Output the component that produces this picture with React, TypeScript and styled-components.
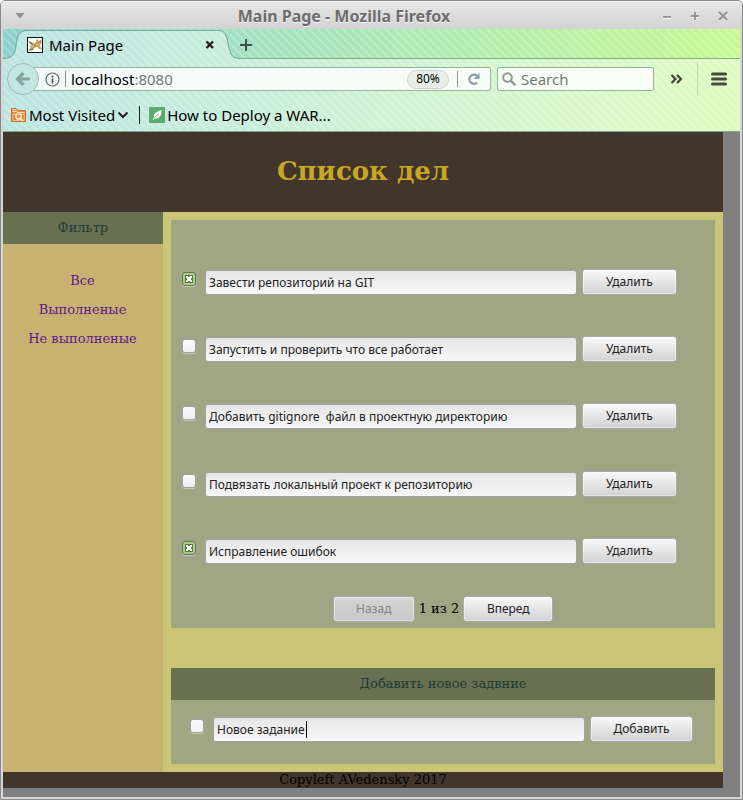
import React, { useState } from "react";
import styled, { createGlobalStyle, css } from "styled-components";

const sans = '"Noto Sans", "Open Sans", sans-serif';
const serif = '"DejaVu Serif", "Liberation Serif", serif';

const GlobalStyle = createGlobalStyle`
  *, *::before, *::after { box-sizing: border-box; }
  body { margin: 0; background: #fff; }
  button, input { font: inherit; color: inherit; margin: 0; }
`;

const Window = styled.div`
  display: flex;
  flex-direction: column;
  min-height: 100vh;
  border: 1px solid #8a8a8a;
  border-radius: 5px 5px 0 0;
  background: #d7d5d6;
  font-family: ${sans};
`;

const TitleBar = styled.div`
  display: flex;
  align-items: center;
  height: 28px;
  padding: 0 13px 0 12px;
  border-top: 1px solid #f4f4f4;
  border-radius: 4px 4px 0 0;
  background: linear-gradient(#e6e6e6, #d3d3d3);
  color: #959595;
`;

const TitleText = styled.div`
  flex: 1;
  text-align: center;
  font-size: 16px;
  line-height: 26px;
  font-weight: 700;
  color: #6d6d6d;
  text-shadow: 0 1px 0 #f5f5f5;
`;

const PlainButton = styled.button`
  display: inline-flex;
  align-items: center;
  justify-content: center;
  flex: none;
  padding: 0;
  border: 0;
  background: none;
  color: inherit;
`;

const TitleButtons = styled.div`
  display: flex;
  gap: 16px;
`;

const Chrome = styled.div`
  margin: 0 2px;
  border-bottom: 1px solid #7fa88c;
  background:
    repeating-linear-gradient(45deg, rgba(255, 255, 255, 0.22) 0 1px, rgba(255, 255, 255, 0) 2px 5px, rgba(255, 255, 255, 0.22) 6px),
    linear-gradient(100deg, #8ad0cc 0%, #9fe0c2 30%, #b2ecae 62%, #c9f991 100%);
`;

const TabStrip = styled.div`
  display: flex;
  height: 30px;
`;

const Tab = styled.div`
  display: flex;
  width: 237px;
`;

const TabEdge = styled.svg`
  display: block;
  flex: none;
`;

const TabBody = styled.div`
  display: flex;
  align-items: center;
  flex: 1;
  gap: 6px;
  margin-top: 1px;
  padding-right: 3px;
  border-top: 1px solid #7ea99c;
  background: rgba(255, 255, 255, 0.42);
  font-size: 15px;
  line-height: 20px;
  color: #000;
`;

const TabLabel = styled.span`
  flex: 1;
`;

const StripRest = styled.div`
  display: flex;
  align-items: center;
  flex: 1;
  border-bottom: 1px solid #7fae86;
  color: #444;
`;

const Toolbars = styled.div`
  background: rgba(255, 255, 255, 0.42);
`;

const NavBar = styled.div`
  display: flex;
  align-items: center;
  height: 40px;
  padding: 0 13px 0 4px;
`;

const BackButton = styled(PlainButton)`
  width: 32px;
  height: 32px;
  border: 1px solid #9cbcb6;
  border-radius: 50%;
  background: #c3e6e0;
  z-index: 1;
`;

const Field = styled.div<{ $grow?: boolean }>`
  display: flex;
  align-items: center;
  height: 24px;
  border: 1px solid #96b499;
  background: rgba(255, 255, 255, 0.8);
  ${(p) =>
    p.$grow
      ? css`
          flex: 1;
          margin-left: -6px;
          padding: 0 9px 0 11px;
          border-radius: 0 2px 2px 0;
        `
      : css`
          width: 157px;
          margin-left: 6px;
          padding: 0 4px;
          border-radius: 2px;
        `}
`;

const Divider = styled.span<{ $h: number; $color: string }>`
  flex: none;
  width: 1px;
  height: ${(p) => p.$h}px;
  background: ${(p) => p.$color};
`;

const Spacer = styled.span<{ $w: number }>`
  flex: none;
  width: ${(p) => p.$w}px;
`;

const Address = styled.div`
  flex: 1;
  margin-left: 5px;
  font-size: 15px;
  line-height: 20px;
  color: #000;
  span { color: #777; }
`;

const Zoom = styled.button`
  height: 19px;
  width: 42px;
  margin-right: 8px;
  padding: 0;
  border: 1px solid #ccd2cc;
  border-radius: 10px;
  background: #e9efe8;
  font-size: 12px;
  line-height: 16px;
  color: #000;
`;

const SearchInput = styled.input`
  flex: 1;
  min-width: 0;
  margin-left: 4px;
  padding: 0;
  border: 0;
  outline: 0;
  background: none;
  font-size: 15px;
  line-height: 20px;
  &::placeholder { color: #757b75; opacity: 1; }
`;

const NavActions = styled.div`
  display: flex;
  align-items: center;
  gap: 13px;
  margin-left: 16px;
  color: #444;
`;

const Bookmarks = styled.nav`
  display: flex;
  align-items: center;
  height: 32px;
  padding: 0 7px 1px;
  font-size: 15px;
  line-height: 20px;
`;

const Bookmark = styled.a`
  display: flex;
  align-items: center;
  gap: 2px;
  color: #000;
  text-decoration: none;
`;

const Viewport = styled.div`
  flex: 1;
  margin: 0 2px 2px;
  padding: 0 17px 9px 0;
  background: #808080;
  font-family: ${serif};
  font-size: 13px;
  line-height: 16px;
  color: #000;
`;

const PageHeader = styled.header`
  display: flex;
  align-items: center;
  justify-content: center;
  height: 80px;
  padding-bottom: 2px;
  background: #42352b;
`;

const Heading = styled.h1`
  margin: 0;
  font-size: 26px;
  line-height: 32px;
  color: #c9a724;
`;

const Columns = styled.div`
  display: flex;
`;

const Sidebar = styled.aside`
  flex: none;
  width: 160px;
  background: #c8b271;
`;

const SectionTitle = styled.h2`
  margin: 0;
  height: 32px;
  font-size: 13px;
  line-height: 32px;
  font-weight: 400;
  text-align: center;
  background: #677152;
  color: #203a36;
`;

const FilterList = styled.ul`
  display: flex;
  flex-direction: column;
  align-items: center;
  gap: 13px;
  margin: 0;
  padding: 29px 1px 0 0;
  list-style: none;
`;

const FilterLink = styled.a`
  color: #5e1a8c;
  text-decoration: none;
`;

const Main = styled.main`
  display: flex;
  flex-direction: column;
  flex: 1;
  min-width: 0;
  gap: 40px;
  padding: 8px;
  background: #cbc576;
`;

const Panel = styled.section`
  padding: 28px 0 6px;
  background: #a0a583;
`;

const TaskList = styled.ul`
  display: grid;
  grid-template-rows: repeat(5, 1fr);
  height: 337px;
  margin: 0;
  padding: 0 38px 0 11px;
  list-style: none;
`;

const TaskRow = styled.li`
  display: flex;
  align-items: center;
`;

const Controls = styled.div`
  display: flex;
  align-items: flex-end;
  flex: 1;
  gap: 5px;
  font-family: ${sans};
`;

const Check = styled.input.attrs({ type: "checkbox" })`
  appearance: none;
  display: flex;
  align-items: center;
  justify-content: center;
  flex: none;
  width: 14px;
  height: 14px;
  margin: 0 4px 9px 0;
  border: 1px solid #a2a2a6;
  border-radius: 3px;
  background: linear-gradient(#fafafa, #f0f0f0);
  box-shadow: 0 1px 0 #c4c7b2;
  &:checked {
    border-color: #66755a;
    background: #a8cb86;
  }
  &:checked::before {
    content: "";
    width: 8px;
    height: 8px;
    border: 1px solid #5a7a48;
    background:
      linear-gradient(#5a7a48, #5a7a48) center top / 2px 1px no-repeat,
      linear-gradient(#5a7a48, #5a7a48) center bottom / 2px 1px no-repeat,
      linear-gradient(#5a7a48, #5a7a48) left center / 1px 2px no-repeat,
      linear-gradient(#5a7a48, #5a7a48) right center / 1px 2px no-repeat,
      #fff;
  }
`;

const TextBox = styled.input.attrs({ type: "text" })`
  width: 100%;
  height: 25px;
  padding: 0 3px;
  border: 1px solid #a3a2aa;
  border-radius: 3px;
  outline: 0;
  background: linear-gradient(#e6e6e6, #f7f7f7);
  font-size: 12px;
  line-height: 16px;
  color: #222;
`;

const TextWrap = styled.div`
  position: relative;
  display: flex;
  flex: 1;
  min-width: 0;
`;

const Caret = styled.span`
  position: absolute;
  left: 93px;
  top: 4px;
  width: 1px;
  height: 17px;
  background: #000;
`;

const Button = styled.button<{ $w: number }>`
  flex: none;
  width: ${(p) => p.$w}px;
  height: 26px;
  padding: 0;
  border: 1px solid #a9a9ae;
  border-radius: 3px;
  background: linear-gradient(#f9f9f9, #d2d2d2);
  box-shadow: inset 0 0 0 1px rgba(255, 255, 255, 0.4);
  font-family: ${sans};
  font-size: 12px;
  line-height: 16px;
  color: #222;
  &:disabled {
    background: linear-gradient(#d4d4d4, #c8c8c8);
    color: #858585;
  }
`;

const Pager = styled.div`
  display: flex;
  align-items: center;
  justify-content: center;
  gap: 4px;
  padding-top: 11px;
`;

const AddForm = styled.form`
  display: flex;
  height: 64px;
  padding: 0 22px 22px 19px;
  background: #a0a583;
`;

const Footer = styled.footer`
  height: 16px;
  text-align: center;
  background: #42352b;
`;

const tasks = [
  { text: "Завести репозиторий на GIT", done: true },
  { text: "Запустить и проверить что все работает", done: false },
  { text: "Добавить gitignore  файл в проектную директорию", done: false },
  { text: "Подвязать локальный проект к репозиторию", done: false },
  { text: "Исправление ошибок", done: true },
];

function BrowserChrome() {
  return (
    <Chrome>
      <TabStrip>
        <Tab>
          <TabEdge width="24" height="30" viewBox="0 0 24 30">
            <path
              d="M0 29.5C9 29.5 12 25 13 17C14 7 16 1.5 24 1.5V30H0Z"
              fill="#fff"
              fillOpacity="0.42"
            />
            <path d="M0 29.5C9 29.5 12 25 13 17C14 7 16 1.5 24 1.5" fill="none" stroke="#71a398" />
          </TabEdge>
          <TabBody>
            <svg width="16" height="16" viewBox="0 0 16 16" aria-hidden="true">
              <rect x="0.5" y="0.5" width="15" height="15" fill="#fff" stroke="#111" />
              <path d="M1.5 13.5L3 11.5L4.500 10L3.500 9.500L5 7.500L2.500 6L2 4.500L5 5.800L7.500 7L9.500 5L9.800 2.500L11.200 4H12.500L14 2.800L14.200 6L12.500 8L13 10L14.500 12L12 11.500L10.500 9.500L8 10L6 12.500L4 13.500Z" fill="#d6a860" stroke="#8a744a" strokeWidth="0.5" />
              <path d="M3 5.500L5.500 7M7.500 7.500L8.500 9M11 5.800H11.800M12.800 5.800H13.300M4 12.500H6" stroke="#51452e" strokeWidth="0.8" />
            </svg>
            <TabLabel>Main Page</TabLabel>
            <PlainButton aria-label="Close tab">
              <svg width="10" height="10" viewBox="0 0 10 10">
                <path d="M1.500 1.500L8 8M8 1.500L1.500 8" stroke="#222" strokeWidth="2.400" />
              </svg>
            </PlainButton>
          </TabBody>
          <TabEdge width="22" height="30" viewBox="0 0 22 30">
            <path d="M0 1.5C7 1.5 8.500 6 10 14C12 25 14 29.5 22 29.5V30H0Z" fill="#fff" fillOpacity="0.42" />
            <path d="M0 1.5C7 1.5 8.500 6 10 14C12 25 14 29.5 22 29.5" fill="none" stroke="#71a387" />
          </TabEdge>
        </Tab>
        <StripRest>
          <PlainButton aria-label="New tab">
            <svg width="12" height="14" viewBox="0 0 12 14">
              <path d="M0 8H12M6 2V14" stroke="#4a4f4b" strokeWidth="2" />
            </svg>
          </PlainButton>
        </StripRest>
      </TabStrip>
      <Toolbars>
        <NavBar>
          <BackButton aria-label="Back">
            <svg width="16" height="16" viewBox="0 0 16 16">
              <path d="M8.500 2L2.500 8L8.500 14M3 8H15" fill="none" stroke="#8ba39f" strokeWidth="3.200" />
            </svg>
          </BackButton>
          <Field $grow>
            <PlainButton aria-label="Site information">
              <svg width="15" height="15" viewBox="0 0 15 15">
                <circle cx="7.500" cy="7.500" r="6.500" fill="none" stroke="#666" strokeWidth="1.200" />
                <path d="M7.500 3.500V5.500M7.500 6.500V11.500" stroke="#555" strokeWidth="1.700" />
              </svg>
            </PlainButton>
            <Spacer $w={5} />
            <Divider $h={16} $color="#8a908c" />
            <Address>
              localhost<span>:8080</span>
            </Address>
            <Zoom>80%</Zoom>
            <Divider $h={16} $color="#919891" />
            <Spacer $w={9} />
            <PlainButton aria-label="Reload">
              <svg width="14" height="14" viewBox="0 0 14 14">
                <path d="M10.200 10.500A4.600 4.600 0 1 1 10.200 4" fill="none" stroke="#8b9ba6" strokeWidth="2.200" />
                <path d="M12.500 1V7H6.800Z" fill="#8b9ba6" />
              </svg>
            </PlainButton>
          </Field>
          <Field>
            <svg width="15" height="15" viewBox="0 0 15 15" aria-hidden="true">
              <circle cx="5.500" cy="5.500" r="4.300" fill="none" stroke="#929792" strokeWidth="2" />
              <path d="M8.700 8.700L13.500 13.500" stroke="#929792" strokeWidth="2.400" />
            </svg>
            <SearchInput type="search" placeholder="Search" aria-label="Search" />
          </Field>
          <NavActions>
            <PlainButton aria-label="More tools">
              <svg width="14" height="10" viewBox="0 0 14 10">
                <path d="M1.500 1L5.500 5L1.500 9M7 1L11 5L7 9" fill="none" stroke="#3f443e" strokeWidth="2.200" />
              </svg>
            </PlainButton>
            <Divider $h={34} $color="#bddcad" />
            <PlainButton aria-label="Open menu">
              <svg width="16" height="14" viewBox="0 0 16 14">
                <path d="M1.500 2H14.500M1.500 7H14.500M1.500 12H14.500" stroke="#444b42" strokeWidth="3" strokeLinecap="round" />
              </svg>
            </PlainButton>
          </NavActions>
        </NavBar>
        <Bookmarks>
          <Bookmark href="#visited">
            <svg width="17" height="17" viewBox="0 0 17 17" aria-hidden="true">
              <path d="M1.500 15.500V2.500H6L8 4.500H15.500V15.500Z" fill="#e8934a" stroke="#cf6a1c" />
              <path d="M2.500 5.500H6.500L8 6.500H14.500M2.500 3.500H5.500" fill="none" stroke="#fbe0c2" />
              <path d="M3 14.500V8.500H14V14.500Z" fill="#de7c2e" stroke="#f9d3ab" strokeWidth="0.8" />
              <circle cx="8.500" cy="10.500" r="2.700" fill="#e8934a" stroke="#fff2e2" strokeWidth="1.300" />
              <path d="M10.500 12.500L13 15" stroke="#fff2e2" strokeWidth="1.600" />
            </svg>
            Most Visited
            <svg width="12" height="8" viewBox="0 0 12 8" aria-hidden="true">
              <path d="M1.500 1.500L6 6L10.500 1.500" fill="none" stroke="#222" strokeWidth="2" />
            </svg>
          </Bookmark>
          <Spacer $w={10} />
          <Divider $h={18} $color="#222" />
          <Spacer $w={9} />
          <Bookmark href="#deploy">
            <svg width="16" height="16" viewBox="0 0 16 16" aria-hidden="true">
              <rect width="16" height="16" fill="#5bab6d" />
              <path d="M12.500 3C12.500 9 10.500 12 6 11.500L4.500 13L3.500 12.500L5 10.500C4 6 8 4.500 12.500 3Z" fill="#fff" />
              <path d="M5 11L10 6.500" stroke="#5bab6d" strokeWidth="0.800" />
            </svg>
            How to Deploy a WAR...
          </Bookmark>
        </Bookmarks>
      </Toolbars>
    </Chrome>
  );
}

export default function App() {
  const [items, setItems] = useState(tasks);
  const [draft, setDraft] = useState("Новое задание");

  return (
    <>
      <GlobalStyle />
      <Window>
        <TitleBar>
          <PlainButton aria-label="Window menu">
            <svg width="14" height="8" viewBox="0 0 14 8">
              <path d="M2.500 1H11.500L7 6.500Z" fill="#8f8f8f" />
            </svg>
          </PlainButton>
          <TitleText>Main Page - Mozilla Firefox</TitleText>
          <TitleButtons>
            <PlainButton aria-label="Minimize">
              <svg width="12" height="12" viewBox="0 0 12 12">
                <path d="M2 8H10" stroke="#fafafa" strokeWidth="2" />
                <path d="M2 7H10" stroke="#959595" strokeWidth="2" />
              </svg>
            </PlainButton>
            <PlainButton aria-label="Maximize">
              <svg width="12" height="12" viewBox="0 0 12 12">
                <path d="M2 7H10M6 3V11" stroke="#fafafa" strokeWidth="2" />
                <path d="M2 6H10M6 2V10" stroke="#959595" strokeWidth="2" />
              </svg>
            </PlainButton>
            <PlainButton aria-label="Close">
              <svg width="12" height="12" viewBox="0 0 12 12">
                <path d="M2 3L10 11M10 3L2 11" stroke="#fafafa" strokeWidth="2" />
                <path d="M2 2L10 10M10 2L2 10" stroke="#959595" strokeWidth="2.400" />
              </svg>
            </PlainButton>
          </TitleButtons>
        </TitleBar>
        <BrowserChrome />
        <Viewport>
          <PageHeader>
            <Heading>Список дел</Heading>
          </PageHeader>
          <Columns>
            <Sidebar>
              <SectionTitle>Фильтр</SectionTitle>
              <FilterList>
                <li><FilterLink href="#all">Все</FilterLink></li>
                <li><FilterLink href="#done">Выполненые</FilterLink></li>
                <li><FilterLink href="#open">Не выполненые</FilterLink></li>
              </FilterList>
            </Sidebar>
            <Main>
              <Panel>
                <TaskList>
                  {items.map((task, i) => (
                    <TaskRow key={i}>
                      <Controls>
                        <Check
                          aria-label={task.text}
                          checked={task.done}
                          onChange={() =>
                            setItems(items.map((t, j) => (j === i ? { ...t, done: !t.done } : t)))
                          }
                        />
                        <TextWrap>
                          <TextBox
                            aria-label={`Задание ${i + 1}`}
                            value={task.text}
                            onChange={(e) =>
                              setItems(items.map((t, j) => (j === i ? { ...t, text: e.target.value } : t)))
                            }
                          />
                        </TextWrap>
                        <Button $w={95} type="button">Удалить</Button>
                      </Controls>
                    </TaskRow>
                  ))}
                </TaskList>
                <Pager>
                  <Button $w={82} type="button" disabled>Назад</Button>
                  <span>1 из 2</span>
                  <Button $w={90} type="button">Вперед</Button>
                </Pager>
              </Panel>
              <section>
                <SectionTitle>Добавить новое задвние</SectionTitle>
                <AddForm onSubmit={(e) => e.preventDefault()}>
                  <Controls>
                    <Check aria-label="Выполнено" />
                    <TextWrap>
                      <TextBox
                        aria-label="Новое задание"
                        value={draft}
                        onChange={(e) => setDraft(e.target.value)}
                      />
                      <Caret />
                    </TextWrap>
                    <Button $w={103} type="submit">Добавить</Button>
                  </Controls>
                </AddForm>
              </section>
            </Main>
          </Columns>
          <Footer>Copyleft AVedensky 2017</Footer>
        </Viewport>
      </Window>
    </>
  );
}
